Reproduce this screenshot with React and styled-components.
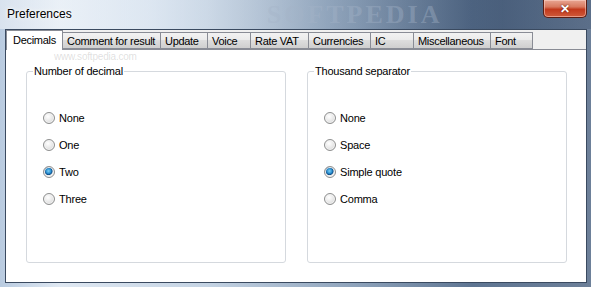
import styled, { createGlobalStyle } from "styled-components";

const GlobalStyle = createGlobalStyle`
  html, body {
    margin: 0;
    padding: 0;
    background: #ffffff;
  }
  body {
    font-family: "Liberation Sans", Arial, sans-serif;
    font-size: 11px;
    letter-spacing: -0.2px;
    color: #000;
  }
`;

const tabs = [
  "Decimals",
  "Comment for result",
  "Update",
  "Voice",
  "Rate VAT",
  "Currencies",
  "IC",
  "Miscellaneous",
  "Font",
];

const tabWidths = [57, 98, 47, 43, 58, 62, 43, 77, 42];

const groups = [
  {
    title: "Number of decimal",
    options: ["None", "One", "Two", "Three"],
    checked: "Two",
  },
  {
    title: "Thousand separator",
    options: ["None", "Space", "Simple quote", "Comma"],
    checked: "Simple quote",
  },
];

const Radio = ({ label, checked }) => (
  <RadioRow>
    <RadioDot $checked={checked} />
    <span>{label}</span>
  </RadioRow>
);

const App = () => {
  return (
    <>
      <GlobalStyle />
      <Window>
        <TitleBar>
          <Title>Preferences</Title>
          <Watermark>SOFTPEDIA</Watermark>
          <CloseButton>✕</CloseButton>
        </TitleBar>
        <Client>
          <TabStrip>
            {tabs.map((t, i) => (
              <Tab key={t} $active={i === 0} $w={tabWidths[i]}>
                {t}
              </Tab>
            ))}
          </TabStrip>
          <Panel>
            <SiteMark>www.softpedia.com</SiteMark>
            {groups.map((g) => (
              <Group key={g.title}>
                <legend>{g.title}</legend>
                <Options>
                  {g.options.map((o) => (
                    <Radio key={o} label={o} checked={o === g.checked} />
                  ))}
                </Options>
              </Group>
            ))}
          </Panel>
        </Client>
      </Window>
    </>
  );
};

const Window = styled.div`
  width: 591px;
  height: 287px;
  box-sizing: border-box;
  display: flex;
  flex-direction: column;
  background: linear-gradient(
    90deg,
    #b9cbe0 0%,
    #dfe8f2 10%,
    #c4d3e3 35%,
    #8ea3bb 60%,
    #5e7592 80%,
    #6d8099 100%
  );
`;

const TitleBar = styled.div`
  height: 29px;
  display: flex;
  align-items: center;
  position: relative;
  background: linear-gradient(
    90deg,
    rgba(255, 255, 255, 0.45) 0%,
    rgba(235, 242, 250, 0.5) 25%,
    rgba(120, 140, 165, 0.2) 55%,
    rgba(30, 50, 80, 0.35) 85%,
    rgba(40, 60, 90, 0.25) 100%
  );
`;

const Title = styled.div`
  font-family: "Liberation Sans", Arial, sans-serif;
  font-size: 12px;
  letter-spacing: 0;
  color: #000;
  padding: 0 0 1px 7px;
  text-shadow: 0 0 6px #fff, 0 0 3px #fff;
`;

const Watermark = styled.div`
  margin-left: 195px;
  font-family: "Liberation Serif", serif;
  font-size: 26px;
  line-height: 28px;
  font-weight: bold;
  letter-spacing: 3px;
  color: rgba(165, 180, 200, 0.4);
  white-space: nowrap;
`;

const CloseButton = styled.div`
  position: absolute;
  right: 4px;
  top: 0;
  width: 44px;
  height: 18px;
  box-sizing: border-box;
  border: 1px solid #5b1e14;
  border-top: none;
  border-radius: 0 0 5px 5px;
  background: linear-gradient(
    180deg,
    #e8a693 0%,
    #d8795f 40%,
    #c2391c 55%,
    #cf5a3a 100%
  );
  box-shadow: inset 0 0 0 1px rgba(255, 220, 210, 0.5);
  color: #fff;
  font-size: 12px;
  font-weight: bold;
  display: flex;
  align-items: center;
  justify-content: center;
  text-shadow: 0 0 2px #4a1008;
`;

const Client = styled.div`
  flex: 1;
  margin: 0 4px 4px 5px;
  border: 1px solid #3a4a60;
  background: #f0f0f0;
  display: flex;
  flex-direction: column;
`;

const TabStrip = styled.div`
  height: 19px;
  display: flex;
  align-items: flex-end;
`;

const Tab = styled.div`
  box-sizing: border-box;
  width: ${(p) => p.$w}px;
  height: ${(p) => (p.$active ? "20px" : "17px")};
  margin-bottom: ${(p) => (p.$active ? "-1px" : "0")};
  padding: ${(p) => (p.$active ? "2px 0 0 6px" : "1px 0 0 4px")};
  border: 1px solid #898c95;
  border-bottom: ${(p) => (p.$active ? "none" : "1px solid #898c95")};
  border-left: ${(p) => (p.$active ? "1px solid #898c95" : "none")};
  background: ${(p) =>
    p.$active
      ? "#ffffff"
      : "linear-gradient(180deg, #f2f2f2 0%, #ebebeb 45%, #dddddd 50%, #cfcfcf 100%)"};
  position: relative;
  z-index: ${(p) => (p.$active ? 2 : 1)};
  font-size: 11px;
  letter-spacing: -0.3px;
  line-height: 14px;
  white-space: nowrap;
  overflow: hidden;
  color: #000;
`;

const Panel = styled.div`
  flex: 1;
  position: relative;
  background: #ffffff;
  border-top: 1px solid #898c95;
  display: grid;
  grid-template-columns: 260px 260px;
  column-gap: 21px;
  padding: 14px 18px 19px 20px;
`;

const SiteMark = styled.div`
  position: absolute;
  left: 48px;
  top: 1px;
  font-size: 10px;
  color: rgba(150, 150, 150, 0.3);
`;

const Group = styled.fieldset`
  margin: 0;
  padding: 0 0 0 16px;
  border: 1px solid #d5d9de;
  border-radius: 3px;
  min-width: 0;

  legend {
    padding: 0 1px;
    margin-left: -10px;
    font-size: 11px;
    line-height: 14px;
  }
`;

const Options = styled.div`
  display: flex;
  flex-direction: column;
  gap: 13px;
  padding-top: 33px;
`;

const RadioRow = styled.label`
  display: flex;
  align-items: center;
  gap: 4px;
  height: 14px;
  font-size: 11px;
`;

const RadioDot = styled.span`
  width: 12px;
  height: 12px;
  box-sizing: border-box;
  border-radius: 50%;
  border: 1px solid #8e8f8f;
  background: ${(p) =>
    p.$checked
      ? "radial-gradient(circle at 45% 40%, #7fd0f5 0%, #2a8fd0 30%, #0d4f8a 45%, #e8e8e8 55%, #f6f6f6 100%)"
      : "radial-gradient(circle at 40% 35%, #ffffff 0%, #e8e8e8 50%, #cfcfcf 100%)"};
  box-shadow: inset 0 0 0 1px #f4f4f4;
`;

export default App;
